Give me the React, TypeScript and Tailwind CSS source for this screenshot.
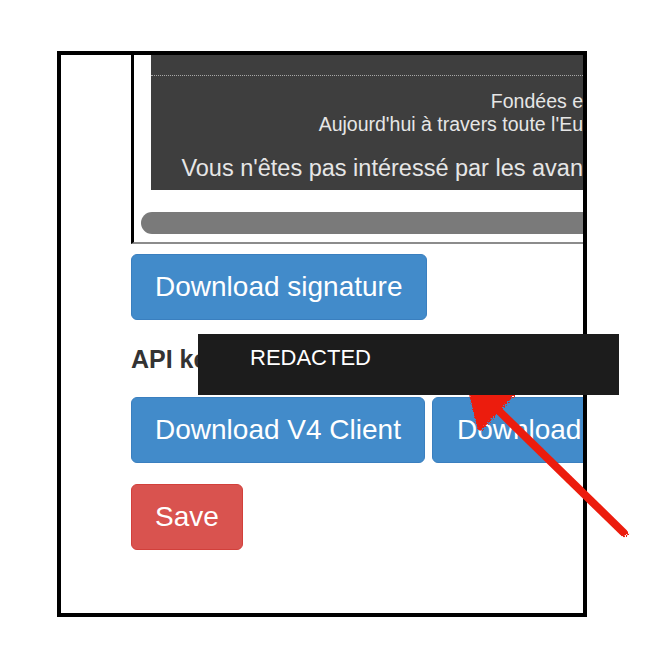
import React from 'react';

const font = { fontFamily: '"Liberation Sans", Arial, sans-serif' };

function Btn({ label, tone = 'blue', className = '' }: { label: string; tone?: 'blue' | 'red'; className?: string }) {
  const colors =
    tone === 'blue'
      ? 'bg-[#428bca] border-[#3a7fbf]'
      : 'bg-[#d9534f] border-[#d2403b]';
  return (
    <button
      className={`h-[66px] flex-none whitespace-nowrap rounded-[6px] border text-[28px] text-white ${colors} ${className}`}
    >
      {label}
    </button>
  );
}

function Arrow() {
  return (
    <svg className="absolute left-0 top-0 pointer-events-none" width="664" height="670" viewBox="0 0 664 670">
      <defs>
        <filter id="rough" x="-10%" y="-10%" width="120%" height="120%">
          <feTurbulence type="fractalNoise" baseFrequency="0.9" numOctaves="2" seed="3" />
          <feDisplacementMap in="SourceGraphic" scale="5" />
        </filter>
      </defs>
      <g filter="url(#rough)" fill="#ec1c0c" stroke="#ec1c0c" strokeLinecap="round" strokeLinejoin="round">
        <line x1="496" y1="408" x2="624" y2="533" strokeWidth="8" />
        <polygon points="470,388 514,392 480,428" strokeWidth="5" />
      </g>
    </svg>
  );
}

export default function App() {
  return (
    <div className="relative w-[664px] h-[670px] bg-white overflow-hidden" style={font}>
      <div className="pt-[51px] pl-[57px]">
        <div className="w-[530px] h-[566px] border-4 border-black overflow-hidden bg-white">
          <div className="pl-[70px]">
            {/* captured embed, cut off at the frame's right edge */}
            <div className="w-[452px] h-[189px] border-l-[3px] border-black border-b-[2px] border-b-[#8c8c8c]">
              <div className="ml-[17px] h-[135px] bg-[#3e3e3e] pt-[20px] text-right text-[#e6e6e6] whitespace-nowrap overflow-hidden">
                <div className="border-t border-dotted border-[#a8a8a8]" />
                <p className="mt-[14px] text-[19.5px] leading-[23px]">Fondées e</p>
                <p className="text-[19.5px] leading-[23px]">Aujourd'hui à travers toute l'Eu</p>
                <p className="mt-[19px] text-[23.5px] leading-[26px]">Vous n'êtes pas intéressé par les avan</p>
              </div>
              <div className="mt-[22px] ml-[7px] h-[22px] rounded-l-full bg-[#7a7a7a]" />
            </div>

            <div className="mt-[10px]">
              <Btn label="Download signature" className="px-[23px]" />
            </div>

            <h3 className="mt-[24px] h-[30px] text-[25px] leading-[30px] font-bold text-[#333]">API key</h3>

            <div className="mt-[23px] flex gap-[7px]">
              <Btn label="Download V4 Client" className="px-[23px]" />
              <Btn label="Download" className="w-[220px] pl-[24px] text-left" />
            </div>

            <div className="mt-[21px]">
              <Btn label="Save" tone="red" className="px-[23px]" />
            </div>
          </div>
        </div>
      </div>

      <Arrow />

      <div className="absolute left-[198px] top-[334px] w-[421px] h-[61px] bg-[#1c1c1c] pl-[52px] pt-[12px]">
        <span className="block text-[22px] leading-[24px] text-white">REDACTED</span>
      </div>
    </div>
  );
}
